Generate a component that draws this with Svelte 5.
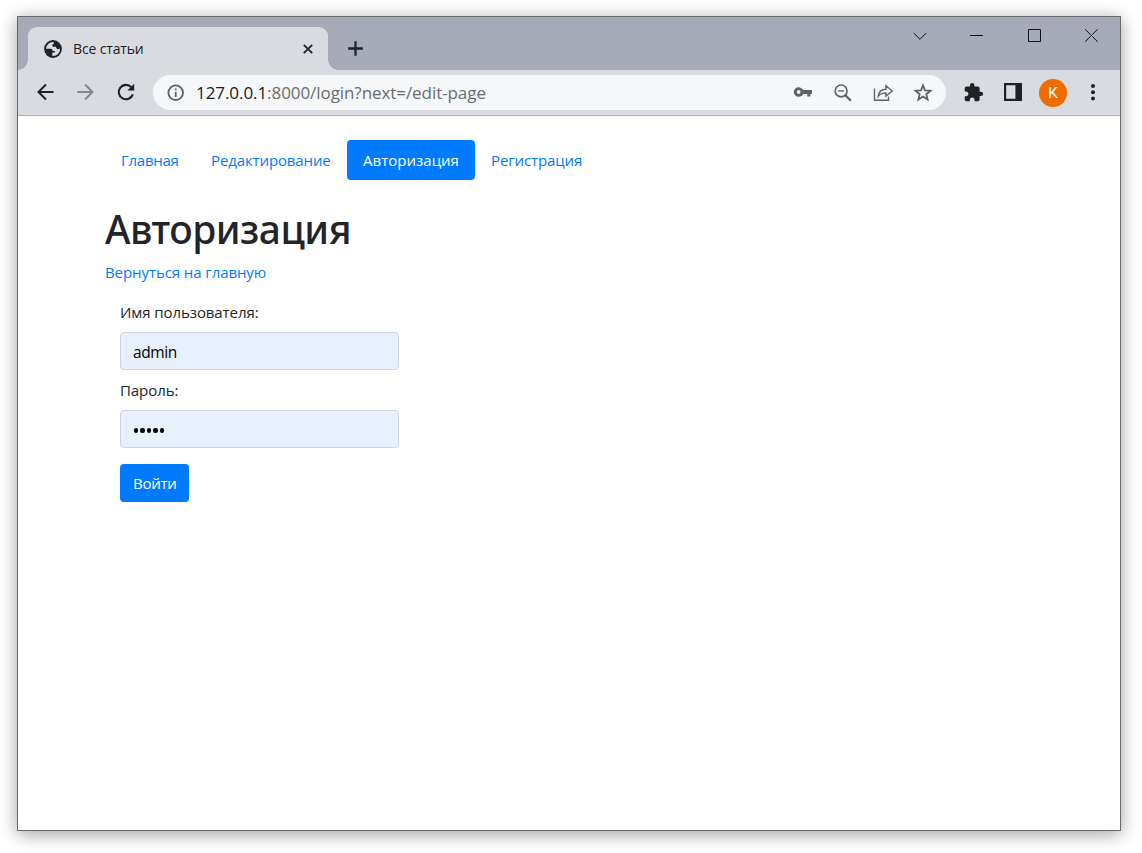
<script>
  const links = [
    { label: 'Главная', cls: 'home' },
    { label: 'Редактирование', cls: 'edit' },
    { label: 'Авторизация', cls: 'login active' },
    { label: 'Регистрация', cls: 'register' }
  ];
  let username = $state('admin');
</script>

<div class="window">
  <div class="tabstrip">
    <div class="tab">
      <svg class="globe" viewBox="0 0 18 18" width="18" height="18">
        <circle cx="9" cy="9" r="8.9" fill="#202124" />
        <path d="M9.6 1.9C6 1.7 2.3 4.600 2 8.700H6.600C8 8.700 8.600 9.600 8.600 10.900H10.900V12.600H8.300V15.900C12.600 16.300 16 13 16 9V8.300C15.200 9.300 13.800 9.500 12.800 8.700C12.200 8.200 12 7.500 12 6.700H9.300C7.900 6.600 7.800 4.500 9.200 4.200C9.900 4.100 9.900 3.400 9.600 1.900Z" fill="#dadbe0" />
      </svg>
      <span class="tab-title">Все статьи</span>
      <svg class="tab-close" viewBox="0 0 10 10" width="10" height="10"><path d="M.8.8l8.400 8.400M9.200.8L.8 9.200" stroke="#202124" stroke-width="1.800" /></svg>
    </div>
    <svg class="plus" viewBox="0 0 16 16" width="16" height="16"><path d="M8.500 1.200v14.600M1.200 8.500h14.600" stroke="#202124" stroke-width="2.300" /></svg>
    <div class="controls">
      <svg viewBox="0 0 14 14" width="14" height="14"><path d="M.7 4l6.300 6.300L13.300 4" /></svg>
      <svg viewBox="0 0 14 14" width="14" height="14"><path d="M0 6.500h13" /></svg>
      <svg viewBox="0 0 14 14" width="14" height="14"><path d="M1.500 .5h12v12h-12z" /></svg>
      <svg viewBox="0 0 14 14" width="14" height="14"><path d="M1.200.3l12.400 12.400M13.600.3L1.200 12.700" /></svg>
    </div>
  </div>

  <div class="toolbar">
    <svg class="tool" viewBox="0 0 20 20" width="20" height="20"><path d="M17.500 10H3M10 2.500L2.500 10l7.500 7.500" stroke="#202124" stroke-width="2" fill="none" /></svg>
    <svg class="tool" viewBox="0 0 20 20" width="20" height="20"><path d="M1.300 10H16M9 2.500l7.500 7.500-7.500 7.500" stroke="#85868b" stroke-width="2" fill="none" /></svg>
    <svg class="tool" viewBox="0 0 20 20" width="20" height="20"><path d="M16.800 12.300A7.200 7.200 0 1 1 15.300 5.200" stroke="#202124" stroke-width="2.100" fill="none" /><path d="M18.200 1.800V8.600H11.400Z" fill="#202124" /></svg>
    <div class="omnibox">
      <svg viewBox="0 0 18 18" width="18" height="18"><circle cx="8.700" cy="8.700" r="7.300" fill="none" stroke="#5f6368" stroke-width="1.800" /><path d="M8.700 4.500v1.800M8.700 7.800v5.100" stroke="#5f6368" stroke-width="1.800" /></svg>
      <span class="url"><b>127.0.0.1</b>:8000/login?next=/edit-page</span>
      <div class="actions">
        <svg viewBox="0 0 20 20" width="20" height="20"><path fill="#5f6368" fill-rule="evenodd" d="M10.300 7A5 4.700 0 1 0 10.300 10.900H14.200V13.600H17.300V10.900H19V7ZM5.700 7.100A1.900 1.900 0 1 1 5.700 10.900 1.900 1.900 0 0 1 5.700 7.100Z" /></svg>
        <svg viewBox="0 0 20 20" width="20" height="20"><g stroke="#5f6368" fill="none"><circle cx="8.100" cy="7.900" r="5.900" stroke-width="1.700" /><path d="M12.400 12.200l5.500 5.500" stroke-width="2.300" /><path d="M5.200 7.900H11" stroke-width="1.400" /></g></svg>
        <svg viewBox="0 0 20 20" width="20" height="20"><path d="M1.500 5.500V17.200H15.500V13.500M5.200 13.300C5.700 8.800 8.500 6.500 12.900 6.300V2.800L19.200 8 12.900 13V9.900C9.300 9.900 7.200 10.700 5.200 13.300Z" fill="none" stroke="#5f6368" stroke-width="1.400" /></svg>
        <svg viewBox="0 0 20 20" width="20" height="20"><path d="M10 2.300L12 7.300 17.500 7.700 13.300 11.200 14.600 16.500 10 13.600 5.400 16.500 6.700 11.200 2.500 7.700 8 7.300Z" fill="none" stroke="#5f6368" stroke-width="1.800" /></svg>
      </div>
    </div>
    <div class="extras">
      <svg viewBox="0 0 24 24" width="21" height="21"><path fill="#202124" d="M20.500 11H19V7c0-1.100-.9-2-2-2h-4V3.500a2.500 2.500 0 0 0-5 0V5H4c-1.100 0-2 .9-2 2v3.800h1.500c1.500 0 2.700 1.200 2.700 2.700S5 16.200 3.500 16.200H2V20c0 1.100.9 2 2 2h3.800v-1.500c0-1.500 1.200-2.700 2.700-2.700s2.700 1.200 2.700 2.700V22H17c1.100 0 2-.9 2-2v-4h1.500a2.500 2.500 0 0 0 0-5z" /></svg>
      <svg class="panel" viewBox="0 0 18 18" width="18" height="18"><path fill="#202124" fill-rule="evenodd" d="M0 0H18V18H0ZM2.200 2.200V15.800H11.400V2.200Z" /></svg>
      <span class="avatar">K</span>
      <svg class="dots" viewBox="0 0 4 18" width="4" height="18"><g fill="#202124"><circle cx="2" cy="3" r="2" /><circle cx="2" cy="9.200" r="2" /><circle cx="2" cy="15.400" r="2" /></g></svg>
    </div>
  </div>

  <main>
    <nav>
      {#each links as link}
        <a href="#top" class={link.cls}><span>{link.label}</span></a>
      {/each}
    </nav>
    <h1>Авторизация</h1>
    <a class="back" href="#top">Вернуться на главную</a>
    <form>
      <label for="user" class="l-user">Имя пользователя:</label>
      <input id="user" bind:value={username} />
      <label for="pass" class="l-pass">Пароль:</label>
      <div id="pass" class="field">{#each Array(5) as _}<i></i>{/each}</div>
      <button type="button"><span>Войти</span></button>
    </form>
  </main>
</div>

<style>
  :global(body) { background: #fff; overflow: hidden; }
  .window {
    box-sizing: border-box;
    width: 1104px;
    height: 815px;
    margin: 16px 0 0 17px;
    border: 1px solid #6a6a6c;
    background: #fff;
    box-shadow: 0 3px 17px rgba(0, 0, 0, .38);
    font-family: "Open Sans", "Noto Sans", sans-serif;
    color: #212529;
  }
  :global(#app) { display: flow-root; height: 853px; }
  svg { display: block; flex: none; }
  .tabstrip { height: 53px; background: #a7abb7; display: flex; align-items: flex-end; }
  .tab {
    box-sizing: border-box;
    position: relative;
    width: 300px;
    height: 43px;
    margin-left: 10px;
    padding: 0 15px 0 16px;
    border-radius: 9px 9px 0 0;
    background: #dadbe0;
    display: flex;
    align-items: center;
  }
  .tab::before, .tab::after {
    content: "";
    position: absolute;
    bottom: 0;
    width: 10px;
    height: 10px;
  }
  .tab::before { left: -10px; background: radial-gradient(circle at 0 0, #a7abb7 9.500px, #dadbe0 10px); }
  .tab::after { right: -10px; background: radial-gradient(circle at 100% 0, #a7abb7 9.500px, #dadbe0 10px); }
  .tab-title { margin-left: 11px; font-size: 14px; letter-spacing: -.15px; color: #202124; }
  .tab-close { margin-left: auto; }
  .plus { margin: 0 0 14px 19px; }
  .controls { margin: 0 22px 27px auto; display: flex; gap: 43px; }
  .controls path { fill: none; stroke: #111; stroke-width: 1; }
  .toolbar {
    box-sizing: border-box;
    height: 46px;
    background: #dadbe0;
    border-bottom: 1px solid #adaeb3;
    display: flex;
    align-items: center;
    padding-left: 18px;
  }
  .tool { margin: 0 20px 1px 0; }
  .omnibox {
    box-sizing: border-box;
    width: 793px;
    height: 35px;
    margin-left: -3px;
    padding: 0 13px 0 14px;
    border-radius: 18px;
    background: #f5f7f9;
    display: flex;
    align-items: center;
  }
  .url { margin-left: 11px; font-size: 17px; letter-spacing: -.07px; color: #6a6d71; }
  .url b { font-weight: 400; color: #1b1c1f; }
  .actions { margin-left: auto; display: flex; gap: 20px; }
  .extras { display: flex; align-items: center; margin-left: 17px; }
  .panel { margin: 0 0 1px 20px; }
  .dots { margin-bottom: 1px; }
  .avatar {
    width: 28px;
    height: 28px;
    margin: 0 24px 0 17px;
    border-radius: 50%;
    background: #ef6c00;
    color: #fff;
    font: 15px/28px Roboto, sans-serif;
    text-align: center;
  }
  main { padding: 24px 0 0 87px; font-size: 16px; line-height: 24px; }
  a { color: #007bff; text-decoration: none; }
  nav { display: flex; height: 40px; }
  nav a { box-sizing: border-box; padding: 8px 0 8px 16px; border-radius: 4px; white-space: nowrap; font-size: 15px; letter-spacing: -.12px; }
  .home { width: 90px; }
  nav .home { letter-spacing: -.28px; }
  .edit { width: 152px; }
  .login { width: 128px; }
  nav .active { background: #007bff; color: #fff; letter-spacing: .02px; }
  h1 {
    margin: 25px 0 7px;
    font-family: "Noto Sans", sans-serif;
    font-size: 39px;
    line-height: 48px;
    font-weight: 500;
    letter-spacing: -.5px;
  }
  .back { display: block; font-size: 15px; letter-spacing: -.08px; }
  form { margin: 16px 0 0 15px; width: 279px; }
  label { display: block; font-size: 15px; margin-bottom: 8px; letter-spacing: -.08px; }
  input, .field {
    box-sizing: border-box;
    display: flex;
    align-items: center;
    width: 279px;
    height: 38px;
    padding: 2px 12px 0;
    border: 1px solid #ced4da;
    border-radius: 4px;
    background: #e8f0fe;
    color: #000;
    font: 15.500px "Open Sans", sans-serif;
    letter-spacing: -.4px;
    outline: 0;
  }
  .l-pass { margin-top: 8px; }
  .field { gap: 2px; padding: 3px 0 0 13px; }
  .field i { width: 4.400px; height: 4.400px; border-radius: 50%; background: #000; }
  button {
    display: block;
    width: 69px;
    height: 38px;
    margin-top: 16px;
    padding: 0 0 0 13px;
    border: 0;
    border-radius: 4px;
    background: #007bff;
    color: #fff;
    text-align: left;
    font: 15px "Open Sans", sans-serif;
    letter-spacing: -.25px;
  }
</style>
